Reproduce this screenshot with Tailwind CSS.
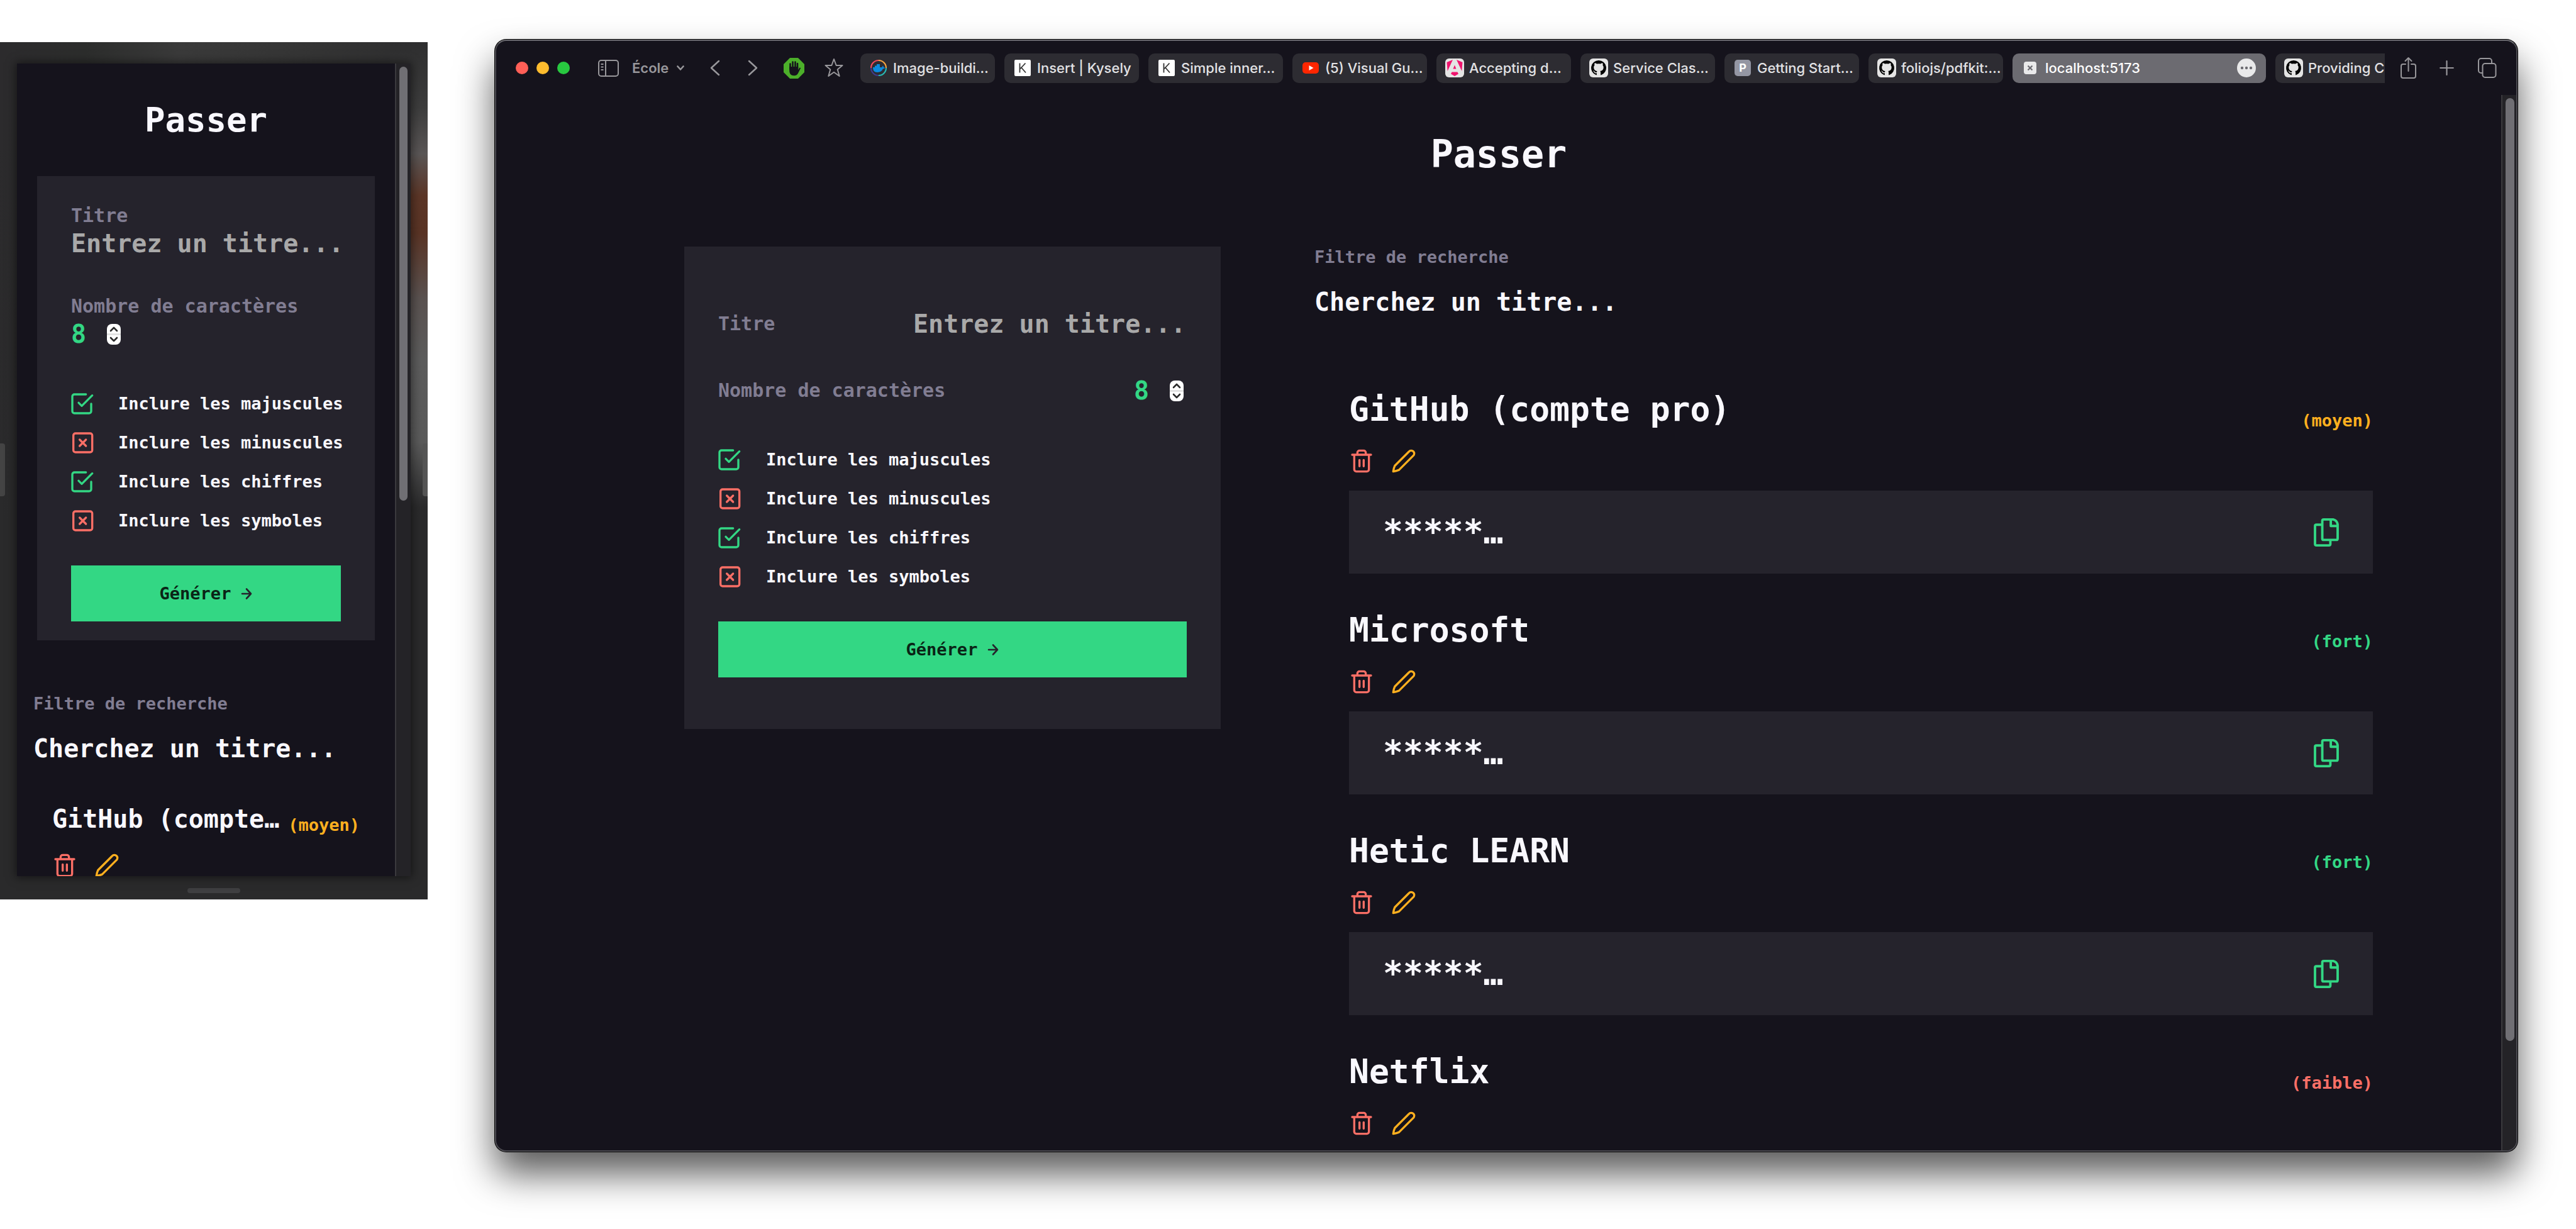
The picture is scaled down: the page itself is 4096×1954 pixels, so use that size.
<!DOCTYPE html>
<html lang="fr">
<head>
<meta charset="utf-8">
<title>Passer</title>
<script src="https://cdn.jsdelivr.net/npm/@tailwindcss/browser@4"></script>
</head>
<body class="bg-white">
<svg class="hidden" aria-hidden="true">
  <symbol id="check" viewBox="0 0 24 24"><g fill="none" stroke="currentColor" stroke-width="2" stroke-linecap="round" stroke-linejoin="round"><path d="m9 11 3 3L22 4"/><path d="M21 12v7a2 2 0 0 1-2 2H5a2 2 0 0 1-2-2V5a2 2 0 0 1 2-2h11"/></g></symbol>
  <symbol id="cross" viewBox="-1 0 24 24"><g fill="none" stroke="currentColor" stroke-width="2" stroke-linecap="round" stroke-linejoin="round"><rect x="3" y="3" width="18" height="18" rx="2"/><path d="m15 9-6 6M9 9l6 6"/></g></symbol>
  <symbol id="trash" viewBox="0 0 24 24"><g fill="none" stroke="currentColor" stroke-width="2" stroke-linecap="round" stroke-linejoin="round"><path d="M3 6h18M19 6v14a2 2 0 0 1-2 2H7a2 2 0 0 1-2-2V6M8 6V4a2 2 0 0 1 2-2h4a2 2 0 0 1 2 2v2M10 11v6M14 11v6"/></g></symbol>
  <symbol id="pencil" viewBox="0 0 24 24"><path fill="none" stroke="currentColor" stroke-width="2" stroke-linecap="round" stroke-linejoin="round" d="M17 3a2.85 2.83 0 1 1 4 4L7.500 20.500Q5 21.500 2 22q.3-3 1.500-5.500Z"/></symbol>
  <symbol id="copy" viewBox="508 738 124 140"><g fill="none" stroke="currentColor" stroke-width="12" stroke-linejoin="round"><path d="M604 744H557q-7 0-7 7V838q0 7 7 7H619q7 0 7-7V768Q622 748 604 744Z"/><path d="M592 744V776H626"/><path d="M550 770H521q-7 0-7 7V865q0 7 7 7H583q7 0 7-7V845"/></g></symbol>
  <symbol id="spinner" viewBox="0 0 22 33"><rect width="22" height="33" rx="8" fill="#fff"/><path d="M0 15h22v3H0z" fill="#e3e3e3"/><path d="m6 11 5-5 5 5M6 22l5 5 5-5" fill="none" stroke="#2b2b2b" stroke-width="2.6" stroke-linecap="round" stroke-linejoin="round"/></symbol>
  <symbol id="github" viewBox="0 0 30 30"><rect width="30" height="30" rx="6" fill="#e4e4e4"/><path fill="#000" d="M15 3a12 12 0 0 0-4 23.300c.6.1.9-.3.9-.6v-2.400c-3.200.7-4-1.400-4-1.400-.6-1.400-1.300-1.700-1.300-1.700-1.100-.8.1-.7.1-.7 1.200 0 1.800 1.200 1.800 1.200 1.100 1.900 2.800 1.300 3.500 1 0-.8.4-1.300.7-1.600-2.700-.4-5.500-1.500-5.500-6.100 0-1.300.5-2.400 1.300-3.300-.2-.4-.6-1.700.1-3.300 0 0 1-.4 3.400 1.200a12 12 0 0 1 6 0C20.300 7 21.300 7.400 21.300 7.400c.7 1.600.3 2.900.1 3.300.8.9 1.300 2 1.300 3.300 0 4.600-2.800 5.700-5.500 6 .5.4.9 1.100.9 2.300v3.400c0 .3.2.7.9.6A12 12 0 0 0 15 3Z"/></symbol>
  <symbol id="kysely" viewBox="0 0 30 30"><rect x="2" y="2" width="26" height="26" rx="2" fill="#fff"/><path d="M10.500 7.500v15M19.500 7.500l-9 9.500M13 14.500l7 8" fill="none" stroke="#333" stroke-width="1.800"/></symbol>
</svg>

<main class="flex h-screen w-full overflow-hidden">

  <!-- Narrow preview -->
  <section class="relative mt-[67px] mb-[524px] w-[680px] shrink-0 overflow-hidden bg-[linear-gradient(90deg,#2c2b2d_0%,#2c2d2c_20%,#3a3a3a_42%,#353535_70%,#2e2e2f_100%)] pt-[34px] pr-[27px] pb-[37px] pl-[27px]">
    <div class="absolute inset-x-0 bottom-0 h-[1200px] bg-[linear-gradient(180deg,transparent,#2a2a2b_50%,#2a2a2b)]"></div>
    <div class="absolute top-0 right-0 h-[740px] w-[60px] bg-[linear-gradient(180deg,#2e2e2f_0%,#3d3d3d_14%,#5a5656_24%,#5c3627_33%,#5a3425_41%,#5a5250_55%,#5c5c5c_68%,#5a5a5a_86%,#2a2a2b_100%)]"></div>
    <div class="absolute top-[638px] left-0 h-[84px] w-2 rounded-r-sm bg-[#444]"></div>
    <div class="absolute top-[638px] right-0 h-[84px] w-2 rounded-l-sm bg-[#555]"></div>
    <div class="absolute bottom-[10px] left-[298px] h-2 w-[84px] rounded bg-[#3f3f41]"></div>

    <div class="relative flex h-full overflow-hidden bg-[#15131c] font-['DejaVu_Sans_Mono',monospace] shadow-[0_0_14px_2px_rgba(0,0,0,0.5)]">
      <div class="min-w-0 flex-1 overflow-hidden pt-[58px]">
        <h1 class="text-center text-[54px] leading-[64px] font-bold text-[#f9f8fe]">Passer</h1>
        <form class="mx-8 mt-[57px] bg-[#25232c] px-[54px] pt-[43px] pb-[30px]">
          <label for="m-title" class="block text-[30px] leading-10 font-bold text-[#817d92]">Titre</label>
          <input id="m-title" type="text" placeholder="Entrez un titre..." class="block h-12 w-[435px] bg-transparent text-[40px] leading-[48px] font-bold placeholder:text-[#a9a9a9]">
          <label for="m-len" class="mt-14 block text-[30px] leading-10 font-bold whitespace-nowrap text-[#817d92]">Nombre de caractères</label>
          <div class="flex items-center">
            <input id="m-len" type="number" value="8" class="h-12 w-[57px] bg-transparent text-[40px] leading-[48px] font-bold text-[#33d784] [appearance:textfield] [&::-webkit-inner-spin-button]:appearance-none">
            <svg class="h-[33px] w-[22px]"><use href="#spinner"/></svg>
          </div>
          <div class="mt-[67px] -mr-4 -ml-[3px] flex flex-col gap-[22px] text-[27px] leading-8 font-bold whitespace-nowrap text-[#f9f8fe]">
            <label class="flex items-center gap-[38px]"><input type="checkbox" checked class="sr-only"><svg class="size-10 shrink-0 text-[#33d784]"><use href="#check"/></svg>Inclure les majuscules</label>
            <label class="flex items-center gap-[38px]"><input type="checkbox" class="sr-only"><svg class="size-10 shrink-0 text-[#fb6f66]"><use href="#cross"/></svg>Inclure les minuscules</label>
            <label class="flex items-center gap-[38px]"><input type="checkbox" checked class="sr-only"><svg class="size-10 shrink-0 text-[#33d784]"><use href="#check"/></svg>Inclure les chiffres</label>
            <label class="flex items-center gap-[38px]"><input type="checkbox" class="sr-only"><svg class="size-10 shrink-0 text-[#fb6f66]"><use href="#cross"/></svg>Inclure les symboles</label>
          </div>
          <button type="button" class="mt-[51px] flex h-[89px] w-full items-center justify-center gap-4 bg-[#33d784] text-[27px] leading-8 font-bold text-[#0a2416]">Générer
            <svg class="h-[22px] w-[18px]" viewBox="0 0 18 22" fill="none" stroke="#25232c" stroke-width="2.600" stroke-linecap="round" stroke-linejoin="round"><path d="M2 11h14M9 3.500l7 7.500-7 7.500"/></svg>
          </button>
        </form>
        <div class="mt-[85px] pl-[26px]">
          <label for="m-search" class="block text-[27px] leading-8 font-bold text-[#817d92]">Filtre de recherche</label>
          <input id="m-search" type="text" placeholder="Cherchez un titre..." class="mt-[31px] block h-12 w-full bg-transparent text-[40px] leading-[48px] font-bold placeholder:text-[#f9f8fe]">
        </div>
        <article class="mt-16 pr-[56px] pl-14">
          <div class="flex items-end gap-3">
            <h2 class="min-w-0 flex-1 truncate text-[40px] leading-[48px] font-bold text-[#f9f8fe]">GitHub (compte pro)</h2>
            <span class="text-[27px] leading-7 font-bold text-[#ffb01f]">(moyen)</span>
          </div>
          <div class="mt-[30px] flex gap-[27px]">
            <button type="button" aria-label="Supprimer" class="text-[#fb6f66]"><svg class="size-10"><use href="#trash"/></svg></button>
            <button type="button" aria-label="Modifier" class="text-[#ffb01f]"><svg class="size-10"><use href="#pencil"/></svg></button>
          </div>
        </article>
      </div>
      <div class="w-[25px] shrink-0 border-l-2 border-[#3a393d] bg-[#242327] pt-[5px] pl-[5px]"><div class="h-[690px] w-[13px] rounded-full bg-[#706f74]"></div></div>
    </div>
  </section>

  <!-- Browser window -->
  <section class="mt-[63px] mr-[93px] mb-[123px] ml-[107px] flex min-w-0 flex-1 flex-col overflow-hidden rounded-[18px] border-2 border-[#4d4c52] border-t-[#6b6a70] bg-[#15131c] shadow-[0_0_0_1px_#000,0_35px_60px_rgba(0,0,0,0.65)]">
    <header class="flex h-[86px] shrink-0 items-center pr-[31px] pl-[31px] font-[Inter,sans-serif] text-[22px] leading-[28px] text-[#98979b]">
      <div class="flex gap-[13px]">
        <button type="button" aria-label="Fermer" class="size-5 rounded-full bg-[#ff5f57]"></button>
        <button type="button" aria-label="Réduire" class="size-5 rounded-full bg-[#febc2e]"></button>
        <button type="button" aria-label="Agrandir" class="size-5 rounded-full bg-[#28c840]"></button>
      </div>
      <button type="button" aria-label="Barre latérale" class="ml-[45px]"><svg class="h-[27px] w-[33px]" viewBox="0 0 33 27" fill="none" stroke="currentColor" stroke-width="2"><rect x="1" y="1" width="31" height="25" rx="4"/><path d="M12 1v25M4.500 7h4M4.500 11.500h4M4.500 16h4"/></svg></button>
      <button type="button" class="ml-[21px] flex w-[83px] items-center justify-between font-semibold">École<svg class="h-2 w-3" viewBox="0 0 12 8" fill="none" stroke="currentColor" stroke-width="2.600" stroke-linecap="round" stroke-linejoin="round"><path d="m1.500 1.500 4.500 5 4.500-5"/></svg></button>
      <button type="button" aria-label="Précédent" class="ml-10"><svg class="h-[26px] w-[17px]" viewBox="0 0 17 26" fill="none" stroke="currentColor" stroke-width="2.500" stroke-linecap="round" stroke-linejoin="round"><path d="M15 2 3 13l12 11"/></svg></button>
      <button type="button" aria-label="Suivant" class="ml-[44px]"><svg class="h-[26px] w-[17px]" viewBox="0 0 17 26" fill="none" stroke="currentColor" stroke-width="2.500" stroke-linecap="round" stroke-linejoin="round"><path d="m2 2 12 11L2 24"/></svg></button>
      <button type="button" aria-label="Bloqueur" class="ml-[40px]"><svg class="size-[33px]" viewBox="0 0 33 33"><path d="M10.500 1h12L32 10.500v12L22.500 32h-12L1 22.500v-12z" fill="#4caf2a" stroke="#4caf2a" stroke-width="2" stroke-linejoin="round"/><path d="M10.500 18V9.500M14.500 16V6.500M18.500 16V6.500M22 17V9" stroke="#15131c" stroke-width="2.600" stroke-linecap="round"/><path d="M9.200 14h14v5l2.300-3.500 1.700.5-4.500 9c-1.500 2.400-3 3.200-6 3.200-5 0-7.500-3-7.500-8z" fill="#15131c"/></svg></button>
      <button type="button" aria-label="Favori" class="ml-8"><svg class="h-[32px] w-[30px]" viewBox="0 0 30 32" fill="none" stroke="currentColor" stroke-width="2" stroke-linejoin="round"><path d="m15 2 3.700 10H28.500l-7.800 6.500 3 10.500L15 22.800 6.300 29l3-10.500L1.500 12h9.800z"/></svg></button>

      <nav class="mr-[25px] ml-[27px] flex min-w-0 flex-1 gap-[15px] overflow-hidden font-medium whitespace-nowrap text-[#e2e2e4]">
        <a href="#" class="flex h-[47px] w-[214px] shrink-0 items-center gap-2 rounded-[10px] bg-[#2d2c32] pl-[14px]"><svg class="size-[30px] shrink-0" viewBox="0 0 30 30"><g fill="none" stroke-width="2.200"><path d="M3 15A12 12 0 0 1 15 3" stroke="#ef4b5c"/><path d="M15 3a12 12 0 0 1 12 12" stroke="#f5a33f"/><path d="M27 15a12 12 0 0 1-12 12" stroke="#27b8b4"/><path d="M15 27A12 12 0 0 1 3 15" stroke="#3f3a8c"/></g><path d="M6 14h3v-2.500h3V9h5v5h3.500c.3-1.500.8-2 1.500-2.500.7.8 1 1.700.8 2.500l2.200.4c-.5 1.500-1.500 1.900-3 1.900C20.500 20 17.500 22 13 22c-5 0-7-3-7-8z" fill="#0b8ce0"/></svg>Image-buildi…</a>
        <a href="#" class="flex h-[47px] w-[214px] shrink-0 items-center gap-2 rounded-[10px] bg-[#2d2c32] pl-[14px]"><svg class="size-[30px] shrink-0"><use href="#kysely"/></svg>Insert | Kysely</a>
        <a href="#" class="flex h-[47px] w-[214px] shrink-0 items-center gap-2 rounded-[10px] bg-[#2d2c32] pl-[14px]"><svg class="size-[30px] shrink-0"><use href="#kysely"/></svg>Simple inner…</a>
        <a href="#" class="flex h-[47px] w-[214px] shrink-0 items-center gap-2 rounded-[10px] bg-[#2d2c32] pl-[14px]"><svg class="size-[30px] shrink-0" viewBox="0 0 30 30"><rect x="2" y="6" width="26" height="18" rx="5" fill="#ff2600"/><path d="m12.500 11 7 4-7 4z" fill="#fff"/></svg>(5) Visual Gu…</a>
        <a href="#" class="flex h-[47px] w-[214px] shrink-0 items-center gap-2 rounded-[10px] bg-[#2d2c32] pl-[14px]"><svg class="size-[30px] shrink-0" viewBox="0 0 30 30"><rect width="30" height="30" rx="6" fill="#e4e4e4"/><path d="M12 2 2.500 6l1.200 14zM18 2l9.500 4-1.200 14zM15 10.500l2.500 6h-5zM10.500 21.500h9l1.500 3-6 3.500-6-3.500z" fill="#f0146e"/></svg>Accepting d…</a>
        <a href="#" class="flex h-[47px] w-[214px] shrink-0 items-center gap-2 rounded-[10px] bg-[#2d2c32] pl-[14px]"><svg class="size-[30px] shrink-0"><use href="#github"/></svg>Service Clas…</a>
        <a href="#" class="flex h-[47px] w-[214px] shrink-0 items-center gap-2 rounded-[10px] bg-[#2d2c32] pl-[14px]"><span class="flex size-[30px] shrink-0 items-center justify-center"><span class="flex size-[26px] items-center justify-center rounded-[5px] bg-[#9496a3] text-[18px] font-bold text-white">P</span></span>Getting Start…</a>
        <a href="#" class="flex h-[47px] w-[214px] shrink-0 items-center gap-2 rounded-[10px] bg-[#2d2c32] pl-[14px]"><svg class="size-[30px] shrink-0"><use href="#github"/></svg>foliojs/pdfkit:…</a>
        <a href="#" class="flex h-[47px] w-[403px] shrink-0 items-center gap-2 rounded-[10px] bg-[#6c6b71] pr-4 pl-[14px] text-white"><svg class="size-[30px] shrink-0" viewBox="0 0 30 30"><rect x="4" y="5" width="20" height="20" rx="4" fill="#e9e9ea"/><path d="m10.500 11.500 7 7M17.500 11.500l-7 7" stroke="#6c6b71" stroke-width="2.200"/></svg><span class="flex-1">localhost:5173</span><svg class="size-[30px]" viewBox="0 0 30 30"><circle cx="15" cy="15" r="15" fill="#e9e9ea"/><g fill="#6c6b71"><circle cx="8" cy="15" r="2.200"/><circle cx="15" cy="15" r="2.200"/><circle cx="22" cy="15" r="2.200"/></g></svg></a>
        <a href="#" class="flex h-[47px] w-[214px] shrink-0 items-center gap-2 rounded-[10px] bg-[#2d2c32] pl-[14px]"><svg class="size-[30px] shrink-0"><use href="#github"/></svg>Providing Co…</a>
      </nav>

      <button type="button" aria-label="Partager"><svg class="h-[36px] w-[25px]" viewBox="0 0 25 36" fill="none" stroke="currentColor" stroke-width="2" stroke-linecap="round" stroke-linejoin="round"><path d="M8 12H4a3 3 0 0 0-3 3v16a3 3 0 0 0 3 3h17a3 3 0 0 0 3-3V15a3 3 0 0 0-3-3h-4M12.500 23V2M7.500 7l5-5 5 5"/></svg></button>
      <button type="button" aria-label="Nouvel onglet" class="ml-[37px]"><svg class="h-[26px] w-[23px]" viewBox="0 0 23 26" fill="none" stroke="currentColor" stroke-width="2.200" stroke-linecap="round"><path d="M11.500 2v22M1.200 13h20.600"/></svg></button>
      <button type="button" aria-label="Onglets" class="ml-[38px]"><svg class="h-[32px] w-[30px]" viewBox="0 0 30 32" fill="none" stroke="currentColor" stroke-width="2"><rect x="7.500" y="9" width="21" height="22" rx="4"/><path d="M7 24H5a4 4 0 0 1-4-4V5a4 4 0 0 1 4-4h13a4 4 0 0 1 4 4v3"/></svg></button>
    </header>

    <div class="flex min-h-0 flex-1 font-['DejaVu_Sans_Mono',monospace]">
      <div class="min-w-0 flex-1 overflow-hidden pt-[54px]">
        <h1 class="text-center text-[60px] leading-[80px] font-bold text-[#f9f8fe]">Passer</h1>
        <div class="mt-[107px] grid grid-cols-[853fr_1738fr] items-start gap-[149px] pr-[149px] pl-[299px]">

          <form class="bg-[#25232c] px-[54px] pt-[99px] pb-[82px]">
            <div class="flex items-center justify-between">
              <label for="d-title" class="text-[30px] leading-[48px] font-bold text-[#817d92]">Titre</label>
              <input id="d-title" type="text" placeholder="Entrez un titre..." class="h-12 w-[435px] bg-transparent text-[40px] leading-[48px] font-bold placeholder:text-[#a9a9a9]">
            </div>
            <div class="mt-[58px] flex items-center">
              <label for="d-len" class="flex-1 text-[30px] leading-[48px] font-bold whitespace-nowrap text-[#817d92]">Nombre de caractères</label>
              <input id="d-len" type="number" value="8" class="h-12 w-[57px] bg-transparent text-[40px] leading-[48px] font-bold text-[#33d784] [appearance:textfield] [&::-webkit-inner-spin-button]:appearance-none">
              <svg class="mr-[5px] h-[33px] w-[22px]"><use href="#spinner"/></svg>
            </div>
            <div class="mt-[66px] -ml-[3px] flex flex-col gap-[22px] text-[27px] leading-8 font-bold whitespace-nowrap text-[#f9f8fe]">
              <label class="flex items-center gap-[39px]"><input type="checkbox" checked class="sr-only"><svg class="size-10 shrink-0 text-[#33d784]"><use href="#check"/></svg>Inclure les majuscules</label>
              <label class="flex items-center gap-[39px]"><input type="checkbox" class="sr-only"><svg class="size-10 shrink-0 text-[#fb6f66]"><use href="#cross"/></svg>Inclure les minuscules</label>
              <label class="flex items-center gap-[39px]"><input type="checkbox" checked class="sr-only"><svg class="size-10 shrink-0 text-[#33d784]"><use href="#check"/></svg>Inclure les chiffres</label>
              <label class="flex items-center gap-[39px]"><input type="checkbox" class="sr-only"><svg class="size-10 shrink-0 text-[#fb6f66]"><use href="#cross"/></svg>Inclure les symboles</label>
            </div>
            <button type="button" class="mt-[51px] flex h-[89px] w-full items-center justify-center gap-4 bg-[#33d784] text-[27px] leading-8 font-bold text-[#0a2416]">Générer
              <svg class="h-[22px] w-[18px]" viewBox="0 0 18 22" fill="none" stroke="#25232c" stroke-width="2.600" stroke-linecap="round" stroke-linejoin="round"><path d="M2 11h14M9 3.500l7 7.500-7 7.500"/></svg>
            </button>
          </form>

          <div class="pt-px">
            <label for="d-search" class="block text-[27px] leading-8 font-bold text-[#817d92]">Filtre de recherche</label>
            <input id="d-search" type="text" placeholder="Cherchez un titre..." class="mt-[31px] block h-12 w-full bg-transparent text-[40px] leading-[48px] font-bold placeholder:text-[#f9f8fe]">
            <div class="mt-[115px] flex flex-col gap-[58px] px-[55px]">
              <article>
                <div class="flex items-end justify-between"><h2 class="text-[53px] leading-[64px] font-bold text-[#f9f8fe]">GitHub (compte pro)</h2><span class="text-[27px] leading-7 font-bold text-[#ffb01f]">(moyen)</span></div>
                <div class="mt-[30px] flex gap-[27px]">
                  <button type="button" aria-label="Supprimer" class="text-[#fb6f66]"><svg class="size-10"><use href="#trash"/></svg></button>
                  <button type="button" aria-label="Modifier" class="text-[#ffb01f]"><svg class="size-10"><use href="#pencil"/></svg></button>
                </div>
                <div class="mt-[27px] flex h-[132px] items-center justify-between bg-[#25232c] px-[54px]"><span class="text-[53px] leading-[64px] font-bold text-[#f9f8fe]">*****…</span><button type="button" aria-label="Copier" class="text-[#33d784]"><svg class="h-[45px] w-10"><use href="#copy"/></svg></button></div>
              </article>
              <article>
                <div class="flex items-end justify-between"><h2 class="text-[53px] leading-[64px] font-bold text-[#f9f8fe]">Microsoft</h2><span class="text-[27px] leading-7 font-bold text-[#33d784]">(fort)</span></div>
                <div class="mt-[30px] flex gap-[27px]">
                  <button type="button" aria-label="Supprimer" class="text-[#fb6f66]"><svg class="size-10"><use href="#trash"/></svg></button>
                  <button type="button" aria-label="Modifier" class="text-[#ffb01f]"><svg class="size-10"><use href="#pencil"/></svg></button>
                </div>
                <div class="mt-[27px] flex h-[132px] items-center justify-between bg-[#25232c] px-[54px]"><span class="text-[53px] leading-[64px] font-bold text-[#f9f8fe]">*****…</span><button type="button" aria-label="Copier" class="text-[#33d784]"><svg class="h-[45px] w-10"><use href="#copy"/></svg></button></div>
              </article>
              <article>
                <div class="flex items-end justify-between"><h2 class="text-[53px] leading-[64px] font-bold text-[#f9f8fe]">Hetic LEARN</h2><span class="text-[27px] leading-7 font-bold text-[#33d784]">(fort)</span></div>
                <div class="mt-[30px] flex gap-[27px]">
                  <button type="button" aria-label="Supprimer" class="text-[#fb6f66]"><svg class="size-10"><use href="#trash"/></svg></button>
                  <button type="button" aria-label="Modifier" class="text-[#ffb01f]"><svg class="size-10"><use href="#pencil"/></svg></button>
                </div>
                <div class="mt-[27px] flex h-[132px] items-center justify-between bg-[#25232c] px-[54px]"><span class="text-[53px] leading-[64px] font-bold text-[#f9f8fe]">*****…</span><button type="button" aria-label="Copier" class="text-[#33d784]"><svg class="h-[45px] w-10"><use href="#copy"/></svg></button></div>
              </article>
              <article>
                <div class="flex items-end justify-between"><h2 class="text-[53px] leading-[64px] font-bold text-[#f9f8fe]">Netflix</h2><span class="text-[27px] leading-7 font-bold text-[#fb6f66]">(faible)</span></div>
                <div class="mt-[30px] flex gap-[27px]">
                  <button type="button" aria-label="Supprimer" class="text-[#fb6f66]"><svg class="size-10"><use href="#trash"/></svg></button>
                  <button type="button" aria-label="Modifier" class="text-[#ffb01f]"><svg class="size-10"><use href="#pencil"/></svg></button>
                </div>
              </article>
            </div>
          </div>
        </div>
      </div>
      <div class="w-6 shrink-0 border-l-2 border-[#3a393d] bg-[#242327] pt-[5px] pl-[5px]"><div class="h-[1499px] w-[14px] rounded-full bg-[#706f74]"></div></div>
    </div>
  </section>
</main>
</body>
</html>
